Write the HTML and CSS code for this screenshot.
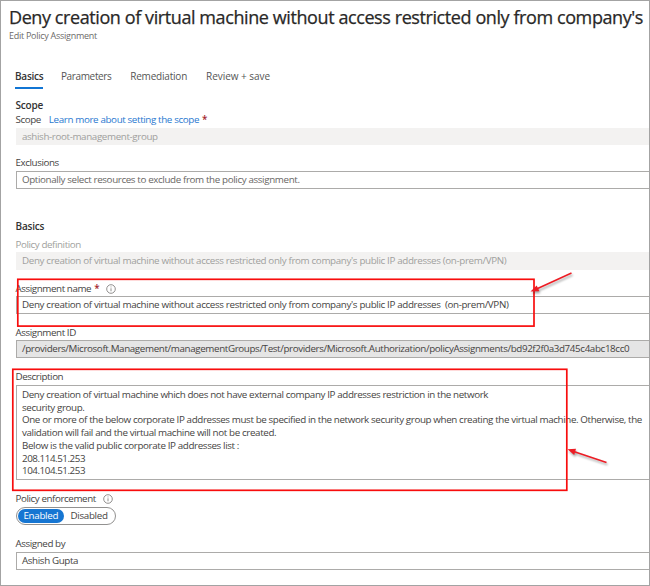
FILE: index.html
```
<!DOCTYPE html>
<html lang="en">
<head>
<meta charset="utf-8">
<title>Edit Policy Assignment</title>
<link rel="stylesheet" href="styles.css">
</head>
<body>
<main class="page">
  <header class="header">
    <h1 class="title">Deny creation of virtual machine without access restricted only from company's</h1>
    <p class="subtitle">Edit Policy Assignment</p>
  </header>
  <nav class="tabs">
    <a class="tab active">Basics</a>
    <a class="tab parameters">Parameters</a>
    <a class="tab remediation">Remediation</a>
    <a class="tab review">Review + save</a>
  </nav>
  <section class="form">
    <h2 class="heading scope-heading">Scope</h2>
    <div class="label scope-label"><span>Scope</span><a class="link">Learn more about setting the scope</a><span class="required">*</span></div>
    <div class="field disabled scope-field">ashish-root-management-group</div>
    <div class="label exclusions-label">Exclusions</div>
    <div class="field placeholder">Optionally select resources to exclude from the policy assignment.</div>

    <h2 class="heading basics-heading">Basics</h2>
    <div class="label muted">Policy definition</div>
    <div class="field disabled definition">Deny creation of virtual machine without access restricted only from company's public IP addresses (on-prem/VPN)</div>
    <div class="label name-label"><span>Assignment name</span><span class="required">*</span>
      <svg class="info" viewBox="0 0 10 10"><circle cx="5" cy="5" r="4.3"/><path d="M5 4.3v3M5 2.5v.9"/></svg>
    </div>
    <div class="field definition">Deny creation of virtual machine without access restricted only from company's public IP addresses&nbsp; (on-prem/VPN)</div>
    <div class="label id-label">Assignment ID</div>
    <div class="field readonly">/providers/Microsoft.Management/managementGroups/Test/providers/Microsoft.Authorization/policyAssignments/bd92f2f0a3d745c4abc18cc0</div>
    <div class="label description-label">Description</div>
    <div class="field area">
      <p class="l1">Deny creation of virtual machine which does not have external company IP addresses restriction in the network</p>
      <p>security group.</p>
      <p class="l3">One or more of the below corporate IP addresses must be specified in the network security group when creating the virtual machine. Otherwise, the</p>
      <p>validation will fail and the virtual machine will not be created.</p>
      <p>Below is the valid public corporate IP addresses list :</p>
      <p class="ip">208.114.51.253</p>
      <p class="ip">104.104.51.253</p>
    </div>
    <div class="label enforcement-label"><span>Policy enforcement</span>
      <svg class="info" viewBox="0 0 10 10"><circle cx="5" cy="5" r="4.3"/><path d="M5 4.3v3M5 2.5v.9"/></svg>
    </div>
    <div class="toggle"><span class="option selected">Enabled</span><span class="option">Disabled</span></div>
    <div class="label assigned-label">Assigned by</div>
    <div class="field">Ashish Gupta</div>
  </section>
  <svg class="annotations" viewBox="0 0 650 586">
    <g class="boxes">
      <rect x="17.8" y="279.3" width="516.2" height="46.8"/>
      <rect x="12.8" y="369.3" width="554" height="121"/>
    </g>
    <g class="arrows">
      <path d="M571.5 273L536 289.300"/><path class="head" d="M530.500 291.500L536.700 285.500 539.400 291.200Z"/>
      <path d="M606.500 462.500L573 451.200"/><path class="head" d="M567.500 449.200L576 448.700 574.200 454.900Z"/>
    </g>
  </svg>
</main>
</body>
</html>
```
FILE: styles.css
```
* { box-sizing: border-box; }
body {
  margin: 0;
  background: #fff;
  color: #454342;
  font: 9.8px/12px "Open Sans", "Noto Sans", sans-serif;
}
h1, h2, p { margin: 0; font-weight: 400; }
.page {
  position: relative;
  width: 650px;
  height: 586px;
  border: 1px solid #a3a3a3;
  overflow: hidden;
  white-space: nowrap;
}
.header { height: 65px; padding: 3px 0 0 8px; }
.title {
  height: 25px;
  font-size: 18px;
  line-height: 26px;
  color: #292827;
  letter-spacing: -0.41px;
  -webkit-text-stroke: .25px #292827;
}
.subtitle { font-size: 9px; line-height: 13px; color: #6c6a69; letter-spacing: -0.27px; }
.tabs { display: flex; height: 23px; padding-left: 14px; gap: 17.5px; }
.tab { font-size: 10px; line-height: 21px; color: #555; }
.tab.active { font-weight: 600; color: #333; border-bottom: 2px solid #1175d4; letter-spacing: -.25px; }
.parameters { letter-spacing: -.35px; }
.remediation { letter-spacing: -.2px; margin-left: 1.2px; }
.review { letter-spacing: -.05px; margin-left: 1.5px; }
.form { padding-left: 14.5px; padding-top: 9px; }
.heading { height: 14px; line-height: 14px; font-weight: 600; font-size: 10px; color: #333; letter-spacing: -.2px; }
.label { display: flex; height: 14px; line-height: 16px; letter-spacing: -0.42px; }
.link { margin-left: 8px; color: #2878d0; letter-spacing: -.37px; }
.required { margin-left: 3px; color: #a4262c; font-weight: 600; }
.field {
  height: 18px;
  line-height: 16px;
  padding-left: 5.5px;
  border: 1px solid #acaba9;
  border-right: 0;
  letter-spacing: -0.37px;
}
.disabled { background: #f3f2f1; border-color: #f3f2f1; color: #a09f9d; }
.scope-field { height: 17px; }
.placeholder { color: #686664; }
.definition { letter-spacing: -.35px; }
.scope-label { height: 16px; }
.exclusions-label { margin-top: 10px; height: 16px; }
.basics-heading { margin-top: 30px; height: 18px; }
.muted { color: #a09f9d; height: 15px; }
.name-label { margin-top: 11px; height: 15px; }
.id-label { margin-top: 11px; height: 15px; }
.readonly { background: #e5e5e5; }
.description-label { margin-top: 11px; height: 16px; }
.area { height: 95px; padding-top: 3px; line-height: 12.7px; }
.l1, .l3 { letter-spacing: -.38px; }
.ip { letter-spacing: -.45px; }
.enforcement-label { margin-top: 11px; height: 16px; }
.info { width: 10px; height: 10px; margin: 3px 0 0 7px; fill: none; stroke: #767472; stroke-width: .8; }
.toggle {
  display: flex;
  width: 100px;
  height: 18px;
  padding: 1px;
  border: 1px solid #929190;
  border-radius: 9px;
}
.option { line-height: 14px; padding: 0 7px; letter-spacing: -.32px; }
.selected { width: 46px; padding: 0 6px; background: #1676d2; color: #fff; border-radius: 7px; }
.assigned-label { margin-top: 11px; height: 16px; }
.annotations { position: absolute; left: -1px; top: -1px; width: 650px; height: 586px; }
.boxes rect { fill: none; stroke: #f80d0d; stroke-width: 1.7; }
.arrows { fill: none; stroke: #ed1c24; stroke-width: 1.5; filter: drop-shadow(1px 2px 1px rgba(0,0,0,.35)); }
.arrows .head { fill: #ed1c24; stroke: none; }
```
